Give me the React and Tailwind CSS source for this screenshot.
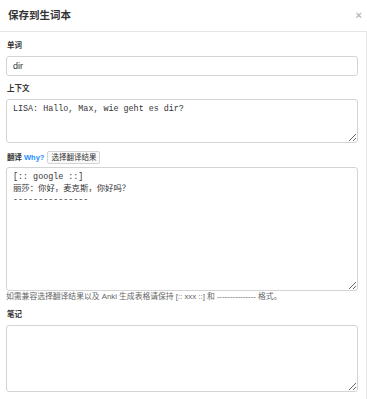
export default function App() {
  const sans = { fontFamily: '"Liberation Sans", "Noto Sans CJK SC", sans-serif' };
  const mono = { fontFamily: '"Liberation Mono", "Noto Sans CJK SC", monospace' };
  return (
    <div className="w-[367px] h-[399px] bg-white text-[#333] overflow-hidden" style={sans}>
      <div className="h-[32px] flex items-center justify-between pl-[8px] pr-[5px] border-b border-[#e5e5e5]">
        <div className="text-[10.5px] font-bold leading-none">保存到生词本</div>
        <div className="text-[11px] font-bold text-[#b8b8b8] leading-none">×</div>
      </div>
      <div className="h-[367px] border-r border-[#e5e5e5] pl-[6px] pr-[9px] pt-[8px]">
        <div className="h-[12px] flex items-center pl-[1px] text-[7.5px] font-bold leading-none">单词</div>
        <input
          readOnly
          value="dir"
          className="mt-[4px] block w-[352px] h-[20px] border border-[#d4d4d4] rounded-[3px] px-[6px] text-[9px] outline-none text-[#333]"
          style={sans}
        />
        <div className="mt-[7px] h-[12px] flex items-center pl-[1px] text-[7.5px] font-bold leading-none">上下文</div>
        <textarea
          readOnly
          value="LISA: Hallo, Max, wie geht es dir?"
          className="mt-[4px] block w-[352px] h-[44px] border border-[#d4d4d4] rounded-[3px] px-[6px] py-[4px] text-[8.4px] leading-[11px] outline-none resize-y text-[#333]"
          style={mono}
        />
        <div className="mt-[8px] h-[13px] flex items-center gap-[2px] pl-[1px]">
          <span className="text-[7.5px] font-bold leading-none">翻译</span>
          <span className="text-[7.5px] font-bold leading-none text-[#1a8cff]">Why?</span>
          <span className="ml-[1px] h-[13px] px-[3px] flex items-center border border-[#d4d4d4] rounded-[2px] bg-[#fafafa] text-[7.5px] leading-none">选择翻译结果</span>
        </div>
        <textarea
          readOnly
          value={"[:: google ::]\n丽莎：你好，麦克斯，你好吗？\n---------------"}
          className="mt-[3px] block w-[352px] h-[124px] border border-[#d4d4d4] rounded-[3px] px-[6px] py-[4px] text-[8.4px] leading-[11.5px] outline-none resize-y text-[#333]"
          style={mono}
        />
        <div className="h-[12px] flex items-center text-[7.8px] leading-none text-[#666]">
          如需兼容选择翻译结果以及 Anki 生成表格请保持 [:: xxx ::] 和 --------------- 格式。
        </div>
        <div className="mt-[6px] h-[12px] flex items-center pl-[1px] text-[7.5px] font-bold leading-none">笔记</div>
        <textarea
          readOnly
          value=""
          className="mt-[4px] block w-[352px] h-[67px] border border-[#d4d4d4] rounded-[3px] px-[6px] py-[4px] text-[9px] outline-none resize-y"
          style={mono}
        />
      </div>
    </div>
  );
}
